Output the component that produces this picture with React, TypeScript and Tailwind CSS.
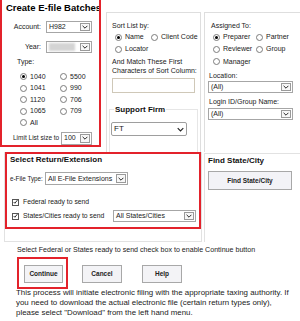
import React from 'react';

const RED = 'border-[#e3222b]';

function Chevron({ className }: { className?: string }) {
  return (
    <svg viewBox="0 0 10 6" className={className ?? 'w-[6px] h-[4px]'} fill="none" stroke="#222" strokeWidth={1.6}>
      <path d="M1 1l4 4 4-4" />
    </svg>
  );
}

// old-style select with a boxed arrow button
function BoxSelect({ width, height, children }: { width: string; height: string; children?: React.ReactNode }) {
  return (
    <div className={`flex items-stretch border border-[#a6a6a6] bg-white ${width} ${height}`}>
      <div className="flex-1 flex items-center pl-[2px] overflow-hidden whitespace-nowrap">{children}</div>
      <div className="w-[10px] m-[1px] border border-[#9a9a9a] bg-[#f7f7f7] flex items-center justify-center">
        <Chevron />
      </div>
    </div>
  );
}

function Radio({ checked }: { checked?: boolean }) {
  return (
    <span className="inline-flex w-[7px] h-[7px] rounded-full border border-[#7c7c7c] bg-white items-center justify-center shrink-0">
      {checked && <span className="w-[3px] h-[3px] rounded-full bg-black" />}
    </span>
  );
}

function Check() {
  return (
    <span className="inline-flex w-[7px] h-[7px] border border-[#555] bg-white items-center justify-center shrink-0">
      <svg viewBox="0 0 8 8" className="w-[6px] h-[6px]" fill="none" stroke="#111" strokeWidth={1.4}>
        <path d="M1 4l2 2 4-5" />
      </svg>
    </span>
  );
}

function RadioItem({ label, checked, width }: { label: string; checked?: boolean; width?: string }) {
  return (
    <div className={`flex items-center gap-[3px] ${width ?? ''}`}>
      <Radio checked={checked} />
      <span>{label}</span>
    </div>
  );
}

function Button({ label, width }: { label: string; width: string }) {
  return (
    <div className={`h-[18px] ${width} border border-[#a8a8a8] bg-[#f3f3f6] flex items-center justify-center font-bold text-[6.5px]`}>
      {label}
    </div>
  );
}

export default function App() {
  return (
    <div className="w-[300px] h-[321px] overflow-hidden bg-white text-[#222] font-['Liberation_Sans',Arial,sans-serif] text-[7px] leading-[8px]">
      {/* top row */}
      <div className="flex h-[152px]">
        {/* Create E-file Batches */}
        <div className={`w-[101px] h-[147px] shrink-0 border-x-2 border-b-2 ${RED} overflow-hidden flex flex-col`}>
          <div className="pl-[4px] pt-[2px] text-[9.5px] leading-[11px] font-bold text-black whitespace-nowrap">Create E-file Batches</div>
          <div className="mt-[8px] flex items-center h-[12px]">
            <span className="w-[39px] text-right">Account:</span>
            <div className="ml-[5px]">
              <BoxSelect width="w-[46px]" height="h-[12px]">H982</BoxSelect>
            </div>
          </div>
          <div className="mt-[8px] flex items-center h-[12px]">
            <span className="w-[39px] text-right">Year:</span>
            <div className="ml-[5px]">
              <BoxSelect width="w-[46px]" height="h-[12px]">
                <span className="w-[26px] h-[8px] bg-[#d4d4d4] blur-[1px]" />
              </BoxSelect>
            </div>
          </div>
          <div className="mt-[5px] pl-[15px]">Type:</div>
          <div className="mt-[5px] pl-[18px] grid grid-cols-[40px_auto] auto-rows-[11.5px] items-center">
            <RadioItem label="1040" checked />
            <RadioItem label="5500" />
            <RadioItem label="1041" />
            <RadioItem label="990" />
            <RadioItem label="1120" />
            <RadioItem label="706" />
            <RadioItem label="1065" />
            <RadioItem label="709" />
            <RadioItem label="All" />
          </div>
          <div className="mt-[3px] flex items-center h-[13px]">
            <span className="pl-[11px] w-[59px] text-[6.5px] whitespace-nowrap">Limit List size to</span>
            <BoxSelect width="w-[31px]" height="h-[13px]">100</BoxSelect>
          </div>
        </div>

        {/* Sort list panel */}
        <div className="ml-[5px] w-[95px] mt-[12px] border-l border-t border-r border-[#dedede] flex flex-col pl-[5px]">
          <div className="mt-[9px]">Sort List by:</div>
          <div className="mt-[1px] flex items-center h-[12px] pl-[3px]">
            <RadioItem label="Name" checked width="w-[36px]" />
            <RadioItem label="Client Code" />
          </div>
          <div className="flex items-center h-[12px] pl-[3px]">
            <RadioItem label="Locator" />
          </div>
          <div className="mt-[2px] leading-[9px] whitespace-nowrap">
            And Match These First
            <br />
            Characters of Sort Column:
          </div>
          <div className="mt-[3px] w-[83px] h-[15px] border border-[#cfc8b8] bg-white" />
          <div className="mt-[16px] -ml-[3px] w-[89px] flex-1 border-l border-t border-r border-[#e6e6e6] flex flex-col">
            <div className="-mt-[4px] pl-[4px] text-[8px] leading-[8px] font-bold text-[#111]">
              <span className="bg-white px-[1px]">Support Firm</span>
            </div>
            <div className="mt-[8px] ml-[1px] w-[76px] h-[14px] border border-[#9e9e9e] rounded-[2px] flex items-center justify-between px-[2px] text-[8px]">
              <span>FT</span>
              <Chevron className="w-[7px] h-[5px]" />
            </div>
          </div>
        </div>

        {/* Assigned to panel */}
        <div className="ml-[3px] flex-1 mt-[12px] border-l border-t border-[#dedede] flex flex-col pl-[3px]">
          <div className="mt-[9px] pl-[3px]">Assigned To:</div>
          <div className="mt-[1px] flex items-center h-[12px] pl-[5px]">
            <RadioItem label="Preparer" checked width="w-[43px]" />
            <RadioItem label="Partner" />
          </div>
          <div className="flex items-center h-[12px] pl-[5px]">
            <RadioItem label="Reviewer" width="w-[43px]" />
            <RadioItem label="Group" />
          </div>
          <div className="flex items-center h-[13px] pl-[5px]">
            <RadioItem label="Manager" />
          </div>
          <div className="mt-[4px] pl-[1px]">Location:</div>
          <div className="mt-[1px]">
            <BoxSelect width="w-[85px]" height="h-[12px]">(All)</BoxSelect>
          </div>
          <div className="mt-[5px] pl-[1px]">Login ID/Group Name:</div>
          <div className="mt-[2px]">
            <BoxSelect width="w-[85px]" height="h-[12px]">(All)</BoxSelect>
          </div>
        </div>
      </div>

      {/* second row */}
      <div className="flex h-[90px]">
        <div className="ml-[4px] w-[198px] border-x border-b border-[#e2e2e2]">
          <div className={`h-[77px] border-2 ${RED} pl-[3px] flex flex-col`}>
            <div className="mt-[1px] text-[8px] leading-[9px] font-bold text-[#111]">Select Return/Extension</div>
            <div className="mt-[8px] flex items-center h-[13px]">
              <span className="w-[35px] text-[6.3px] whitespace-nowrap">e-File Type:</span>
              <BoxSelect width="w-[83px]" height="h-[13px]">All E-File Extensions</BoxSelect>
            </div>
            <div className="mt-[13px] flex items-center h-[8px] pl-[2px] gap-[4px] text-[6.8px]">
              <Check />
              <span>Federal ready to send</span>
            </div>
            <div className="mt-[4px] flex items-center h-[12px] pl-[2px] text-[6.8px]">
              <Check />
              <span className="ml-[4px] w-[90px] whitespace-nowrap">States/Cities ready to send</span>
              <BoxSelect width="w-[83px]" height="h-[12px]">
                <span className="text-[7px]">All States/Cities</span>
              </BoxSelect>
            </div>
          </div>
        </div>
        <div className="ml-[2px] flex-1 mt-[1px] border-l border-t border-[#e2e2e2] pl-[3px] flex flex-col">
          <div className="mt-[2px] text-[8px] leading-[9px] font-bold text-[#111]">Find State/City</div>
          <div className="mt-[6px] w-[84px] h-[19px] border border-[#a8a8a8] bg-[#f3f3f7] flex items-center justify-center font-bold text-[6.5px]">
            Find State/City
          </div>
        </div>
      </div>

      {/* bottom */}
      <div className="mt-[4px] pl-[17px] text-[7.1px] leading-[8px] whitespace-nowrap">
        Select Federal or States ready to send check box to enable Continue button
      </div>
      <div className="mt-[3px] flex items-start pl-[17px]">
        <div className={`w-[51px] h-[32px] border-2 ${RED} pl-[5px] pt-[6px]`}>
          <Button label="Continue" width="w-[39px]" />
        </div>
        <div className="ml-[14px] mt-[8px]">
          <Button label="Cancel" width="w-[40px]" />
        </div>
        <div className="ml-[20px] mt-[8px]">
          <Button label="Help" width="w-[40px]" />
        </div>
      </div>
      <div className="-mt-[1px] pl-[16px] text-[7.9px] leading-[10px] whitespace-nowrap">
        This process will initiate electronic filing with the appropriate taxing authority. If
        <br />
        you need to download the actual electronic file (certain return types only),
        <br />
        please select "Download" from the left hand menu.
      </div>
    </div>
  );
}
